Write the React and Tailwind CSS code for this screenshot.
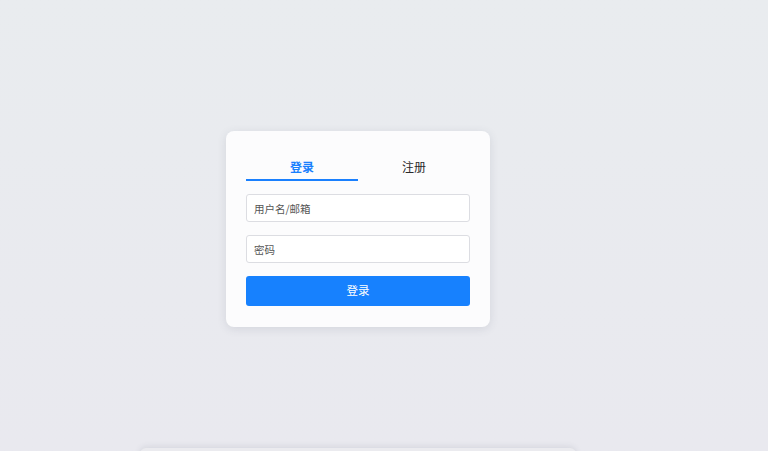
import React, { useState } from "react";

const font = { fontFamily: '"Noto Sans CJK SC", "Noto Sans", sans-serif' };

const LoginCard = () => {
  const [tab, setTab] = useState("login");

  return (
    <div className="w-[264px] rounded-lg bg-[#fcfcfd] px-5 pt-5 pb-[21px] shadow-[0_2px_10px_rgba(60,64,90,0.12)]">
      {/* Tabs */}
      <div className="flex h-[30px]">
        <button
          onClick={() => setTab("login")}
          className={`flex-1 border-b-2 pt-[3px] text-[12px] ${
            tab === "login"
              ? "border-[#1a80fe] font-bold text-[#1a80fe]"
              : "border-transparent text-[#2a2a2a]"
          }`}
        >
          登录
        </button>
        <button
          onClick={() => setTab("register")}
          className={`flex-1 border-b-2 pt-[3px] text-[12px] ${
            tab === "register"
              ? "border-[#1a80fe] font-bold text-[#1a80fe]"
              : "border-transparent text-[#2a2a2a]"
          }`}
        >
          注册
        </button>
      </div>

      <div className="mt-[13px] flex flex-col gap-[13px]">
        <input
          placeholder="用户名/邮箱"
          className="h-[28px] w-full rounded-[3px] border border-[#dcdde2] bg-white px-[7px] text-[10.5px] text-[#333] outline-none placeholder:text-[#555]"
        />
        <input
          type="password"
          placeholder="密码"
          className="h-[28px] w-full rounded-[3px] border border-[#dcdde2] bg-white px-[7px] text-[10.5px] text-[#333] outline-none placeholder:text-[#555]"
        />
        <button className="h-[30px] w-full rounded-[3px] bg-[#1781fe] text-[11.5px] text-white">
          登录
        </button>
      </div>
    </div>
  );
};

export default function App() {
  return (
    <div style={font} className="overflow-hidden bg-gradient-to-b from-[#e9ecef] to-[#e9e9ef]">
      <div className="flex h-[451px] flex-col items-center pr-[52px] pt-[131px]">
        <LoginCard />
        <div className="mt-[121px] h-[40px] w-[436px] shrink-0 rounded-md bg-[#ebebef] shadow-[0_-1px_6px_rgba(60,64,90,0.12)]" />
      </div>
    </div>
  );
}
